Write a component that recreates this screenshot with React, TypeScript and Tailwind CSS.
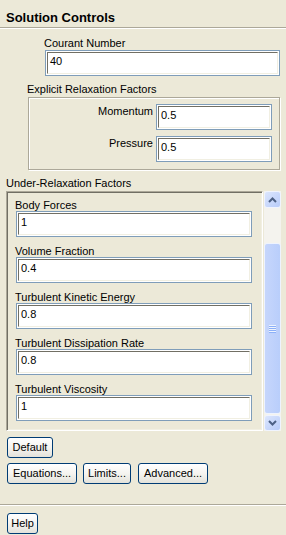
import React from 'react';

const font = "font-['Liberation_Sans',Arial,sans-serif]";

function Field({ value, className = '' }: { value: string; className?: string }) {
  return (
    <div className={`h-[26px] border border-[#7F9DB9] bg-white p-px ${className}`}>
      <div className="h-full border border-t-[#716F64] border-l-[#716F64] border-r-[#F1EFE2] border-b-[#F1EFE2] pl-[2px] pt-[1px] leading-[14px]">
        {value}
      </div>
    </div>
  );
}

function XpButton({ label, width }: { label: string; width: string }) {
  return (
    <button
      className={`${width} h-[21px] rounded-[3px] border border-[#003C74] bg-linear-to-b from-white via-[#F5F4F0] to-[#E3E2DA] text-[11px] leading-[19px] text-black`}
    >
      {label}
    </button>
  );
}

function Arrow({ up }: { up?: boolean }) {
  return (
    <svg width="9" height="6" viewBox="0 0 9 6">
      <polyline
        points={up ? '1,5 4.5,1.5 8,5' : '1,1 4.5,4.5 8,1'}
        fill="none"
        stroke="#4D6185"
        strokeWidth="2"
      />
    </svg>
  );
}

function ScrollBar() {
  return (
    <div className="ml-px flex h-[240px] w-[17px] flex-col bg-[#F4F3EE]">
      <div className="flex h-[17px] items-center justify-center rounded-[3px] border border-[#F0F4FE] bg-linear-to-br from-[#DCE6FD] to-[#B8CCF9]">
        <Arrow up />
      </div>
      <div className="h-[35px]" />
      <div className="flex h-[171px] items-center justify-center rounded-[3px] border border-[#EEF3FE] bg-linear-to-r from-[#C6D6FC] to-[#B9CEFB]">
        <div className="flex w-[7px] flex-col">
          <div className="h-px bg-[#EEF4FE]" />
          <div className="h-px bg-[#8CB0F8]" />
          <div className="h-px bg-[#EEF4FE]" />
          <div className="h-px bg-[#8CB0F8]" />
          <div className="h-px bg-[#EEF4FE]" />
          <div className="h-px bg-[#8CB0F8]" />
          <div className="h-px bg-[#EEF4FE]" />
          <div className="h-px bg-[#8CB0F8]" />
        </div>
      </div>
      <div className="h-px" />
      <div className="flex h-[16px] items-center justify-center rounded-[3px] border border-[#F0F4FE] bg-linear-to-br from-[#DCE6FD] to-[#B8CCF9]">
        <Arrow />
      </div>
    </div>
  );
}

const underRelax = [
  { label: 'Body Forces', value: '1' },
  { label: 'Volume Fraction', value: '0.4' },
  { label: 'Turbulent Kinetic Energy', value: '0.8' },
  { label: 'Turbulent Dissipation Rate', value: '0.8' },
  { label: 'Turbulent Viscosity', value: '1' },
];

export default function App() {
  return (
    <div className={`h-[535px] w-[286px] overflow-hidden bg-[#ECE9D8] text-[11px] text-black ${font}`}>
      {/* Title */}
      <div className="h-[27px] pl-[6px] pt-[10px] text-[13px] font-bold leading-[16px]">Solution Controls</div>
      <div className="border-t border-b border-t-[#ACA899] border-b-white" />

      {/* Courant Number */}
      <div className="ml-[44px] mt-[8px] leading-[13px]">Courant Number</div>
      <Field value="40" className="ml-[45px] w-[235px]" />

      {/* Explicit Relaxation Factors */}
      <div className="ml-[27px] mt-[7px] leading-[13px]">Explicit Relaxation Factors</div>
      <div className="ml-[28px] mt-px flex h-[73px] w-[252px] flex-col gap-[6px] border border-[#ACA899] pr-[7px] pt-[6px] shadow-[inset_1px_1px_0_#fff,1px_1px_0_#fff]">
        <div className="flex items-start justify-end gap-[3px]">
          <span className="mt-px leading-[13px]">Momentum</span>
          <Field value="0.5" className="w-[116px]" />
        </div>
        <div className="flex items-start justify-end gap-[3px]">
          <span className="mt-px leading-[13px]">Pressure</span>
          <Field value="0.5" className="w-[116px]" />
        </div>
      </div>

      {/* Under-Relaxation Factors */}
      <div className="ml-[6px] mt-[7px] leading-[13px]">Under-Relaxation Factors</div>
      <div className="mt-px flex">
        <div className="ml-[6px] h-[240px] w-[257px] border border-t-[#ACA899] border-l-[#ACA899] border-r-white border-b-white shadow-[inset_1px_1px_0_#716F64,inset_-1px_-1px_0_#F1EFE2] pl-[8px] pt-[7px]">
          {underRelax.map((f, i) => (
            <div key={f.label} className={i > 0 ? 'mt-[8px]' : ''}>
              <div className="leading-[12px]">{f.label}</div>
              <Field value={f.value} className="ml-px w-[236px]" />
            </div>
          ))}
        </div>
        <ScrollBar />
      </div>

      {/* Buttons */}
      <div className="ml-[7px] mt-[6px]">
        <XpButton label="Default" width="w-[46px]" />
      </div>
      <div className="ml-[7px] mt-[5px] flex gap-[6px]">
        <XpButton label="Equations..." width="w-[70px]" />
        <XpButton label="Limits..." width="w-[48px]" />
        <div className="ml-px">
          <XpButton label="Advanced..." width="w-[70px]" />
        </div>
      </div>

      <div className="mt-[20px] border-t border-b border-t-[#ACA899] border-b-white" />
      <div className="ml-[7px] mt-[7px]">
        <XpButton label="Help" width="w-[31px]" />
      </div>
    </div>
  );
}
